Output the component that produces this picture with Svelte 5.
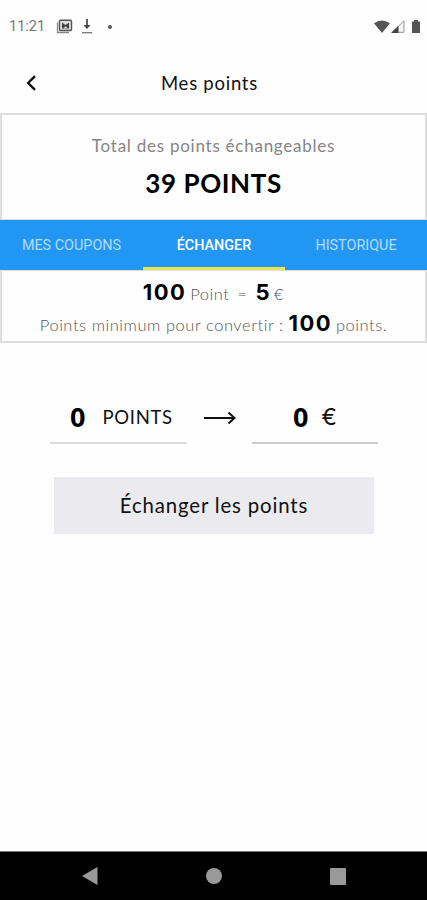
<script lang="ts">
	const total = 39;
	const rate = { points: 100, euros: 5 };
	const minimum = 100;

	const tabs = ["MES COUPONS", "ÉCHANGER", "HISTORIQUE"];
	let active = $state(1);

	let points = $state(0);
	let euros = $derived((points / rate.points) * rate.euros);
</script>

<div class="screen">
	<div class="status">
		<span class="clock">11:21</span>
		<svg class="gallery" width="17" height="15" viewBox="0 0 17 15">
			<path d="M1.5 3.5v10h11.5" fill="none" stroke="#888" stroke-width="1.3" />
			<rect x="3.5" y="1.2" width="12" height="10.3" rx="1" fill="#ddd" stroke="#555" stroke-width="1.4" />
			<path d="M6 9.5V3.5l3.5 2.5L13 3.5v6z" fill="#444" />
			<path d="M7.5 9.2l2-2 2 2z" fill="#ddd" />
		</svg>
		<svg class="download" width="12" height="15" viewBox="0 0 12 15">
			<path d="M6 0v8" stroke="#444" stroke-width="1.7" />
			<path d="M2.5 6h7L6 10z" fill="#444" />
			<path d="M1 13.7h10" stroke="#777" stroke-width="1.3" />
		</svg>
		<span class="dot"></span>
		<div class="signals">
			<svg width="16" height="13" viewBox="0 0 16 13">
				<path d="M0 3.2Q8-2.4 16 3.2L8 13z" fill="#555" />
			</svg>
			<svg width="14" height="13" viewBox="0 0 14 13">
				<path d="M1.2 12.3L13 .8v11.5z" fill="#f4f4f4" stroke="#999" stroke-width="1" />
				<path d="M0 13l7.5-7.3V13z" fill="#444" />
			</svg>
			<svg class="battery" width="8" height="13" viewBox="0 0 8 13">
				<path d="M2 0h4v1.4h2V13H0V1.4h2z" fill="#555" />
			</svg>
		</div>
	</div>

	<header>
		<button class="back" aria-label="Retour">
			<svg width="11" height="16" viewBox="0 0 11 16">
				<path d="M9 1.2L2.2 8L9 14.8" fill="none" stroke="#111" stroke-width="2.4" />
			</svg>
		</button>
		<h1>Mes points</h1>
	</header>

	<section class="total">
		<p>Total des points échangeables</p>
		<strong>{total} POINTS</strong>
	</section>

	<nav>
		{#each tabs as tab, i}
			<button class:active={active === i} onclick={() => (active = i)}>{tab}</button>
		{/each}
	</nav>

	<section class="rate">
		<p class="equals">
			<b>{rate.points}</b><span class="unit">Point</span><span class="sign">=</span><b>{rate.euros}</b><span class="euro">€</span>
		</p>
		<p class="minimum"><span class="before">Points minimum pour convertir :</span><b>{minimum}</b><span>points.</span></p>
	</section>

	<div class="convert">
		<div class="field from"><b>{points}</b><span>POINTS</span></div>
		<svg class="arrow" width="32" height="14" viewBox="0 0 32 14">
			<path d="M0 7h30M24.500 1.500L30.500 7l-6 5.500" fill="none" stroke="#111" stroke-width="2" />
		</svg>
		<div class="field to"><b>{euros}</b><span>€</span></div>
	</div>

	<button class="submit">Échanger les points</button>

	<footer>
		<svg width="16" height="18" viewBox="0 0 16 18"><path d="M0 9L15.500 0v18z" fill="#999" /></svg>
		<svg width="16" height="16" viewBox="0 0 16 16"><circle cx="8" cy="8" r="8" fill="#999" /></svg>
		<svg width="16" height="17" viewBox="0 0 16 17"><rect width="16" height="17" rx="1" fill="#999" /></svg>
	</footer>
</div>

<style>
	:global(body) {
		margin: 0;
		background: #fff;
	}

	.screen {
		display: flex;
		flex-direction: column;
		width: 427px;
		height: 900px;
		overflow: hidden;
		font-family: Lato, sans-serif;
		color: #111;
		background: #fefefe;
	}

	button {
		padding: 0;
		border: none;
		background: none;
		font: inherit;
		color: inherit;
	}

	p,
	h1 {
		margin: 0;
		font-weight: 400;
		white-space: nowrap;
	}

	.status {
		display: flex;
		align-items: center;
		height: 53px;
		padding: 0 7px 0 9px;
	}

	.clock {
		width: 47px;
		font-family: Roboto, sans-serif;
		font-size: 14.5px;
		color: #777;
	}

	.download {
		margin-left: 8px;
	}

	.dot {
		width: 4px;
		height: 4px;
		margin-left: 15px;
		border-radius: 50%;
		background: #555;
	}

	.signals {
		display: flex;
		margin-left: auto;
		gap: 1px;
	}

	.battery {
		margin-left: 6px;
	}

	header {
		display: grid;
		grid-template-columns: 56px 1fr 64px;
		align-items: center;
		height: 60px;
	}

	.back {
		display: flex;
		padding-left: 26px;
	}

	h1 {
		text-align: center;
		font-size: 18.5px;
		letter-spacing: 0.75px;
	}

	.total {
		box-sizing: border-box;
		height: 107px;
		padding-top: 20px;
		border: 2px solid #ddd;
		border-bottom-width: 1px;
		text-align: center;
	}

	.total p {
		font-size: 17px;
		line-height: 22px;
		letter-spacing: 0.75px;
		color: #858585;
	}

	.total strong {
		display: block;
		margin-top: 10px;
		font-size: 26px;
		line-height: 32px;
		font-weight: 700;
		letter-spacing: 0.6px;
		color: #000;
	}

	nav {
		display: grid;
		grid-template-columns: 143px 142px 142px;
		height: 50px;
		background: #2196f3;
	}

	nav button {
		padding-top: 3px;
		border-bottom: 3px solid transparent;
		font-family: Roboto, sans-serif;
		font-size: 14.4px;
		color: #b5dcfb;
	}

	nav .active {
		border-color: #f1e34c;
		font-weight: 500;
		color: #fff;
	}

	.rate {
		box-sizing: border-box;
		height: 73px;
		padding-top: 6px;
		border: 2px solid #ddd;
		border-top-width: 1px;
		color: #555;
	}

	.rate p {
		display: flex;
		justify-content: center;
		align-items: baseline;
		height: 31px;
		line-height: 31px;
		font-size: 16.5px;
		font-weight: 300;
		letter-spacing: 0.55px;
	}

	b {
		font-family: Inter, sans-serif;
		font-weight: 700;
		color: #000;
	}

	.rate b {
		font-size: 22px;
		letter-spacing: 1.4px;
	}

	.rate .unit {
		margin: 0 8px 0 4px;
	}

	.sign {
		margin-right: 8px;
	}

	.euro {
		margin-left: 3px;
	}

	.minimum b {
		margin: 0 4px 0 5px;
	}

	.convert {
		display: flex;
		align-items: center;
		margin-top: 48px;
		padding-left: 50px;
	}

	.field {
		display: flex;
		align-items: center;
		box-sizing: border-box;
		height: 53px;
		border-bottom: 2px solid #ddd;
	}

	.field b {
		font-family: "Noto Sans", sans-serif;
		font-size: 27px;
		line-height: 50px;
	}

	.field span {
		font-size: 18.5px;
		letter-spacing: 0.7px;
	}

	.from {
		width: 137px;
		padding-left: 20px;
		gap: 17px;
	}

	.to {
		width: 126px;
		padding-left: 41px;
		gap: 13px;
		border-color: #ccc;
	}

	.to span {
		font-family: Inter, sans-serif;
		font-size: 23px;
	}

	.arrow {
		margin: 0 16px 0 17px;
	}

	.submit {
		width: 320px;
		height: 57px;
		margin: 33px 0 0 54px;
		padding-bottom: 2px;
		background: #ebebef;
		font-size: 20.4px;
		letter-spacing: 0.85px;
	}

	footer {
		display: flex;
		align-items: center;
		box-sizing: border-box;
		height: 49px;
		margin-top: auto;
		padding-left: 82px;
		gap: 108px;
		border-top: 1px solid #777;
		background: #000;
	}
</style>
